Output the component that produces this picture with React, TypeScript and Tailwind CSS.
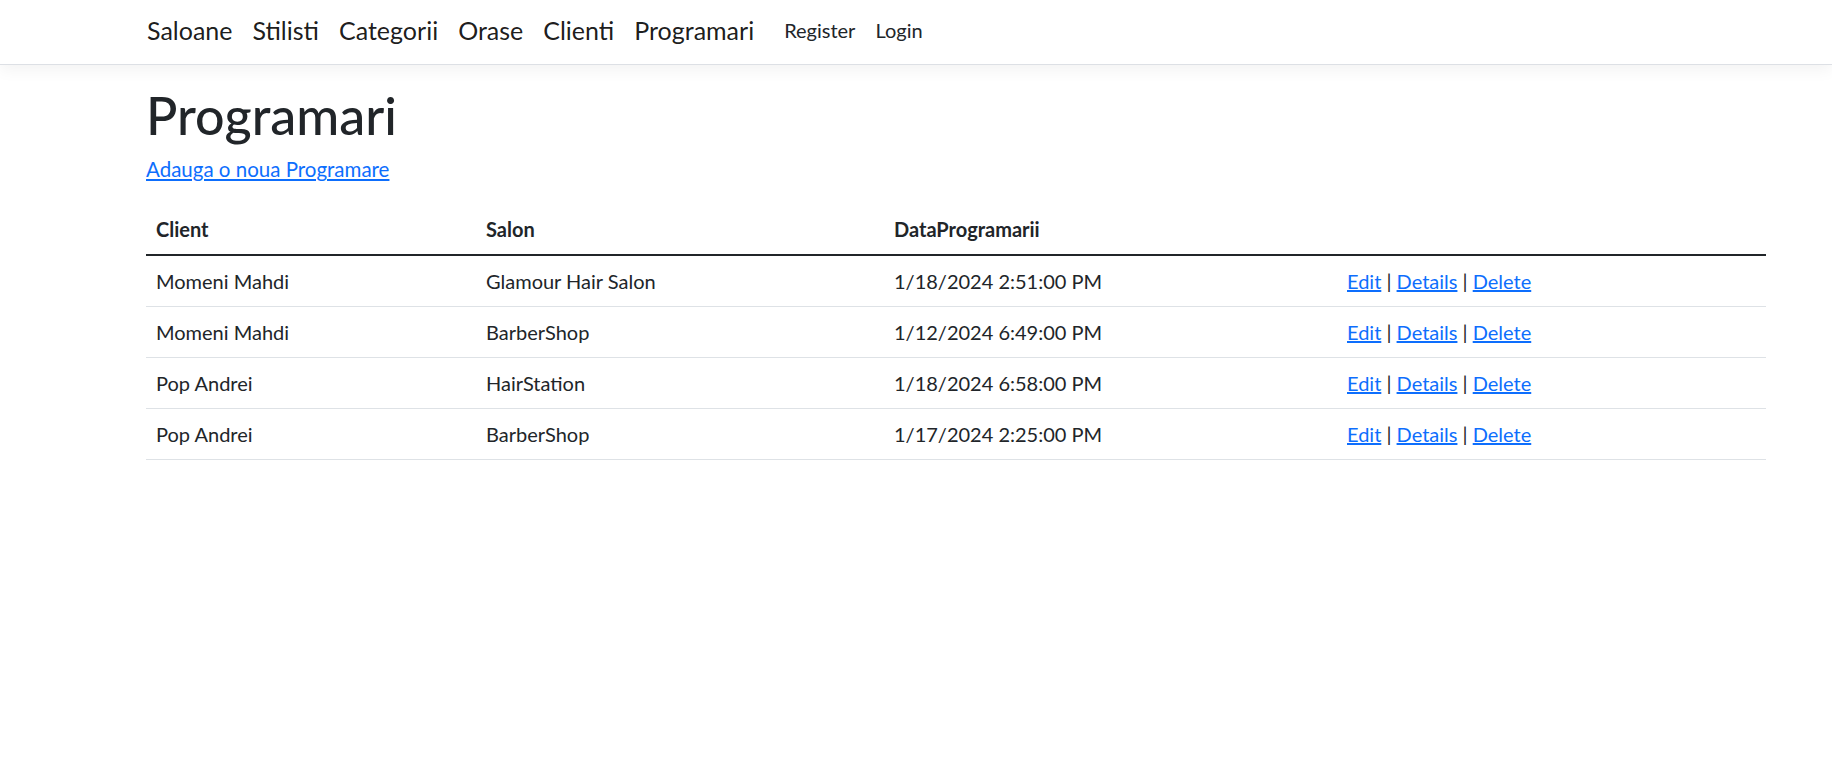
const rows = [
  { client: "Momeni Mahdi", salon: "Glamour Hair Salon", data: "1/18/2024 2:51:00 PM" },
  { client: "Momeni Mahdi", salon: "BarberShop", data: "1/12/2024 6:49:00 PM" },
  { client: "Pop Andrei", salon: "HairStation", data: "1/18/2024 6:58:00 PM" },
  { client: "Pop Andrei", salon: "BarberShop", data: "1/17/2024 2:25:00 PM" },
];

const mainLinks = ["Saloane", "Stilisti", "Categorii", "Orase", "Clienti", "Programari"];

export default function App() {
  return (
    <div className="min-h-screen bg-white font-['Lato','Liberation_Sans',sans-serif] text-[20px] text-[#212529]">
      {/* Navbar */}
      <header className="h-[65px] border-b border-[#dde0e5] bg-white shadow-[0_5px_15px_rgba(0,0,0,0.05)]">
        <nav className="ml-[137px] flex h-full items-center pb-[4px]">
          <ul className="flex items-center">
            {mainLinks.map((l) => (
              <li key={l}>
                <a href="#" className="block px-[10px] text-[25px] leading-[38px] text-black/90">
                  {l}
                </a>
              </li>
            ))}
          </ul>
          <ul className="ml-[10px] flex items-center">
            <li>
              <a href="#" className="block px-[10px] text-[20px] leading-[30px] text-[#212529]">
                Register
              </a>
            </li>
            <li>
              <a href="#" className="block px-[10px] text-[20px] leading-[30px] text-[#212529]">
                Login
              </a>
            </li>
          </ul>
        </nav>
      </header>

      {/* Content */}
      <main className="ml-[146px] w-[1620px] pt-[19px]">
        <h1 className="mb-[8px] text-[52px] font-medium leading-[62px]">Programari</h1>
        <p className="mb-[20px] leading-[30px]">
          <a href="#" className="text-[20.5px] text-[#0d6efd] underline">
            Adauga o noua Programare
          </a>
        </p>

        <table className="w-full border-collapse text-left">
          <thead>
            <tr className="border-b-2 border-[#212529]">
              <th className="w-[330px] px-[10px] py-[10px] font-bold leading-[30px]">Client</th>
              <th className="w-[408px] px-[10px] py-[10px] font-bold leading-[30px]">Salon</th>
              <th className="w-[453px] px-[10px] py-[10px] font-bold leading-[30px]">DataProgramarii</th>
              <th className="px-[10px] py-[10px]"></th>
            </tr>
          </thead>
          <tbody>
            {rows.map((r, i) => (
              <tr key={i} className="border-b border-[#dee2e6]">
                <td className="px-[10px] py-[10px] leading-[30px]">{r.client}</td>
                <td className="px-[10px] py-[10px] leading-[30px]">{r.salon}</td>
                <td className="px-[10px] py-[10px] leading-[30px]">{r.data}</td>
                <td className="px-[10px] py-[10px] leading-[30px]">
                  <a href="#" className="text-[#0d6efd] underline">Edit</a> |{" "}
                  <a href="#" className="text-[#0d6efd] underline">Details</a> |{" "}
                  <a href="#" className="text-[#0d6efd] underline">Delete</a>
                </td>
              </tr>
            ))}
          </tbody>
        </table>
      </main>
    </div>
  );
}
